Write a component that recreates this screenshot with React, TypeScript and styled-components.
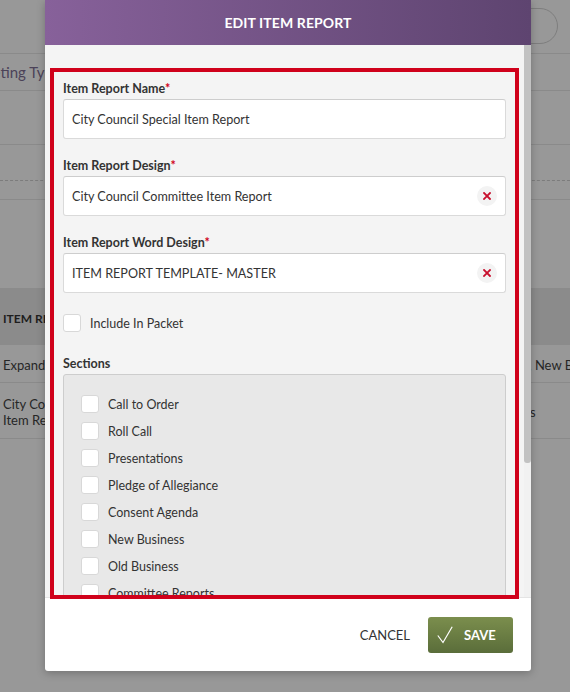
import styled, { createGlobalStyle } from "styled-components";

const GlobalStyle = createGlobalStyle`
  html, body {
    margin: 0;
    padding: 0;
  }
  body {
    font-family: Lato, "Liberation Sans", sans-serif;
    background: #989898;
  }
  * {
    box-sizing: border-box;
  }
`;

const Page = styled.div`
  position: relative;
  width: 570px;
  height: 692px;
  overflow: hidden;
  background: #989898;
  color: #262626;
`;

/* dimmed page behind the dialog */

const TopBar = styled.div`
  height: 54px;
  display: flex;
  justify-content: flex-end;
  align-items: center;
  padding: 0 12px 2px 0;
  border-bottom: 1px solid #8a8a8a;
`;

const SearchPill = styled.div`
  width: 140px;
  height: 36px;
  border: 1px solid #7e7e7e;
  border-radius: 18px;
`;

const FilterRow = styled.div<{ $h: number; $dashed?: boolean }>`
  height: ${(p) => p.$h}px;
  display: flex;
  align-items: center;
  border-bottom: 1px ${(p) => (p.$dashed ? "dashed #7c7c7c" : "solid #8a8a8a")};
`;

const FilterLabel = styled.span`
  margin-left: -29px;
  font-size: 15px;
  color: #4b4258;
  white-space: nowrap;
`;

const Spacer = styled.div<{ $h: number }>`
  height: ${(p) => p.$h}px;
`;

const TableHead = styled.div`
  height: 57px;
  display: grid;
  grid-template-columns: 200px 252px 1fr;
  align-items: center;
  background: #8b8b8b;
  font-size: 12px;
  font-weight: 700;
  text-transform: uppercase;
  color: #1e1e1e;
`;

const TableRow = styled.div<{ $h: number }>`
  height: ${(p) => p.$h}px;
  display: grid;
  grid-template-columns: 200px 252px 1fr;
  align-items: center;
  border-bottom: 1px solid #8a8a8a;
  font-size: 13px;
  line-height: 16px;
`;

const Cell = styled.div`
  padding: 3px 0 0 3px;
  white-space: nowrap;
  overflow: hidden;
`;

/* dialog */

const Modal = styled.div`
  position: absolute;
  top: 0;
  left: 45px;
  width: 486px;
  height: 671px;
  display: flex;
  flex-direction: column;
  background: #fff;
  border-radius: 0 0 3px 3px;
  box-shadow: 0 2px 8px rgba(0, 0, 0, 0.25);
  overflow: hidden;
`;

const ModalHeader = styled.div`
  height: 45px;
  flex-shrink: 0;
  display: flex;
  align-items: center;
  justify-content: center;
  background: linear-gradient(90deg, #87619a 0%, #5e4470 100%);
  color: #fff;
  font-size: 14px;
  font-weight: 700;
  text-transform: uppercase;
  letter-spacing: 0.1px;
`;

const ModalBody = styled.div`
  flex: 1;
  min-height: 0;
  display: flex;
  background: #f4f4f4;
  border-bottom: 1px solid #e4e4e4;
`;

const FormColumn = styled.div`
  flex: 1;
  overflow: hidden;
  padding: 36px 18px 0 18px;
`;

const ScrollTrack = styled.div`
  width: 7px;
  flex-shrink: 0;
  background: #f1f1f1;
`;

const ScrollThumb = styled.div`
  height: 418px;
  background: #c2c2c2;
  border-radius: 0 0 3px 3px;
`;

const Field = styled.div`
  margin-bottom: 19px;
`;

const Label = styled.div`
  font-size: 12.5px;
  line-height: 16px;
  font-weight: 700;
  color: #333;
  margin-bottom: 2px;
`;

const Required = styled.span`
  color: #d0021b;
`;

const InputBox = styled.div`
  height: 40px;
  display: flex;
  align-items: center;
  padding: 0 8px;
  background: #fff;
  border: 1px solid #dadada;
  border-top-color: #cdcdcd;
  border-radius: 3px;
  font-size: 12.6px;
  color: #333;
`;

const InputText = styled.span`
  flex: 1;
  white-space: nowrap;
`;

const ClearButton = styled.span`
  width: 20px;
  height: 20px;
  display: flex;
  align-items: center;
  justify-content: center;
  border-radius: 50%;
  background: #f3f3f3;
`;

const CheckRow = styled.label<{ $spaced?: boolean }>`
  display: flex;
  align-items: center;
  gap: 9px;
  height: 18px;
  margin: ${(p) => (p.$spaced ? "21px 0 24px" : "0")};
  font-size: 12.5px;
  color: #333;
`;

const Box = styled.span`
  width: 18px;
  height: 18px;
  flex-shrink: 0;
  background: #fff;
  border: 1px solid #d8d8d8;
  border-radius: 3px;
`;

const SectionsBox = styled.div`
  display: flex;
  flex-direction: column;
  gap: 9px;
  padding: 20px 17px 20px;
  background: #e8e8e8;
  border: 1px solid #cdcdcd;
  border-radius: 3px;
`;

const Footer = styled.div`
  height: 73px;
  flex-shrink: 0;
  display: flex;
  justify-content: flex-end;
  align-items: center;
  gap: 18px;
  padding-right: 18px;
`;

const CancelButton = styled.button`
  padding: 0;
  border: none;
  background: none;
  font-family: inherit;
  font-size: 13px;
  color: #333;
  text-transform: uppercase;
`;

const SaveButton = styled.button`
  width: 85px;
  height: 36px;
  display: flex;
  align-items: center;
  gap: 11px;
  padding: 0 0 0 9px;
  border: none;
  border-radius: 3px;
  background: linear-gradient(180deg, #7b8e4d 0%, #5a6d3a 100%);
  font-family: inherit;
  font-size: 13px;
  font-weight: 700;
  color: #fff;
  text-transform: uppercase;
`;

const Highlight = styled.div`
  position: absolute;
  top: 68px;
  left: 5px;
  width: 469px;
  height: 531px;
  border: 4px solid #d0011b;
  pointer-events: none;
`;

const ClearIcon = () => (
  <svg width="8" height="8" viewBox="0 0 8 8">
    <path d="M1 1L7 7M7 1L1 7" stroke="#c8102e" strokeWidth="1.8" strokeLinecap="square" />
  </svg>
);

const CheckIcon = () => (
  <svg width="16" height="18" viewBox="0 0 16 18">
    <path d="M0.8 9.5L6 16.5L15.2 0.8" fill="none" stroke="#fff" strokeWidth="1.2" />
  </svg>
);

const sections = [
  "Call to Order",
  "Roll Call",
  "Presentations",
  "Pledge of Allegiance",
  "Consent Agenda",
  "New Business",
  "Old Business",
  "Committee Reports",
  "Public Comment",
  "Adjournment",
];

export default function App() {
  return (
    <Page>
      <GlobalStyle />
      <TopBar>
        <SearchPill />
      </TopBar>
      <FilterRow $h={37}>
        <FilterLabel>Meeting Type</FilterLabel>
      </FilterRow>
      <FilterRow $h={54} />
      <FilterRow $h={36} $dashed />
      <FilterRow $h={19} />
      <Spacer $h={88} />
      <TableHead>
        <Cell>Item Report Name</Cell>
        <Cell>Design</Cell>
        <Cell>Sections</Cell>
      </TableHead>
      <TableRow $h={38}>
        <Cell>Expanded Item Report</Cell>
        <Cell>Item Report</Cell>
        <Cell>Old Business, New Business</Cell>
      </TableRow>
      <TableRow $h={56}>
        <Cell>
          City Council
          <br />
          Item Report
        </Cell>
        <Cell>City Council Item Report</Cell>
        <Cell>Proclamations</Cell>
      </TableRow>

      <Modal>
        <ModalHeader>Edit Item Report</ModalHeader>
        <ModalBody>
          <FormColumn>
            <Field>
              <Label>
                Item Report Name<Required>*</Required>
              </Label>
              <InputBox>
                <InputText>City Council Special Item Report</InputText>
              </InputBox>
            </Field>
            <Field>
              <Label>
                Item Report Design<Required>*</Required>
              </Label>
              <InputBox>
                <InputText>City Council Committee Item Report</InputText>
                <ClearButton>
                  <ClearIcon />
                </ClearButton>
              </InputBox>
            </Field>
            <Field>
              <Label>
                Item Report Word Design<Required>*</Required>
              </Label>
              <InputBox>
                <InputText>ITEM REPORT TEMPLATE- MASTER</InputText>
                <ClearButton>
                  <ClearIcon />
                </ClearButton>
              </InputBox>
            </Field>
            <CheckRow $spaced>
              <Box />
              Include In Packet
            </CheckRow>
            <Label>Sections</Label>
            <SectionsBox>
              {sections.map((s) => (
                <CheckRow key={s}>
                  <Box />
                  {s}
                </CheckRow>
              ))}
            </SectionsBox>
          </FormColumn>
          <ScrollTrack>
            <ScrollThumb />
          </ScrollTrack>
        </ModalBody>
        <Footer>
          <CancelButton>Cancel</CancelButton>
          <SaveButton>
            <CheckIcon />
            Save
          </SaveButton>
        </Footer>
        <Highlight />
      </Modal>
    </Page>
  );
}
